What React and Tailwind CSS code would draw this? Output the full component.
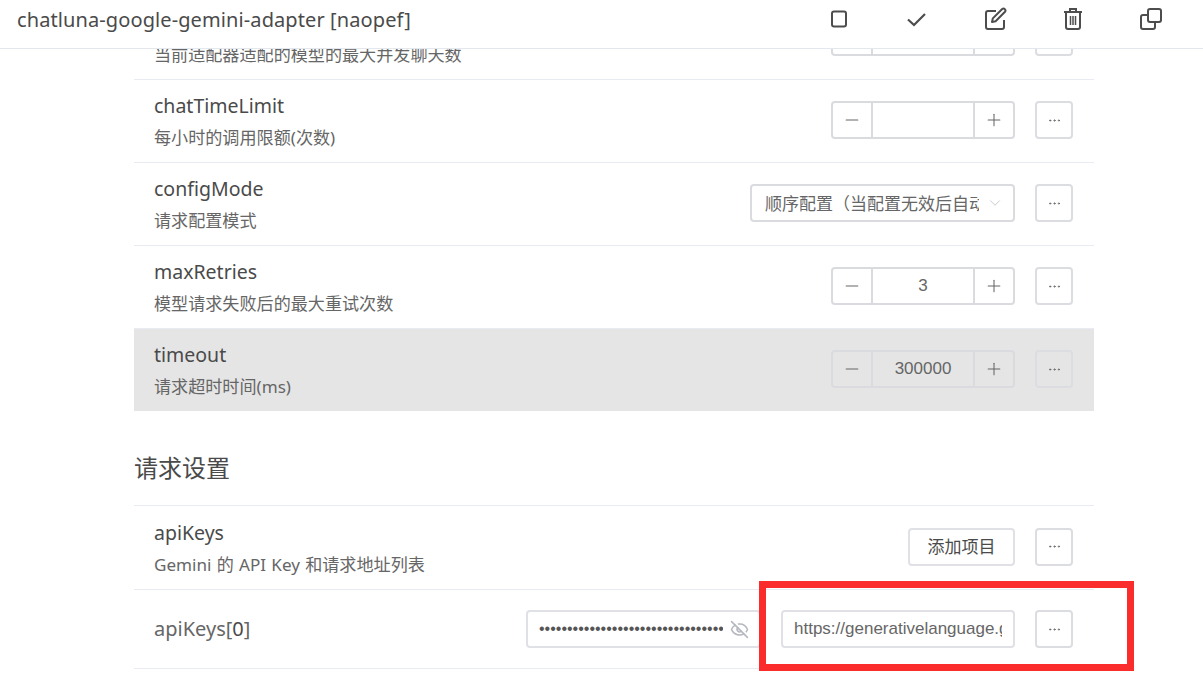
import React from "react";
import { Minus, Plus, Ellipsis, ChevronDown, EyeOff } from "lucide-react";

function More() {
  return (
    <button className="flex h-[38px] w-[38px] shrink-0 items-center justify-center rounded-[4px] border-2 border-[#dbdde1] text-[#666]">
      <Ellipsis size={15} strokeWidth={1.5} />
    </button>
  );
}

function NumberBox({ value }) {
  return (
    <div className="flex h-[38px] w-[184px] items-center rounded-[4px] border-2 border-[#d9dbdf] text-[#666]">
      <span className="flex h-full w-[40px] items-center justify-center border-r-2 border-[#d9dbdf]">
        <Minus size={20} strokeWidth={1.25} />
      </span>
      <span className="flex-1 pb-[1px] text-center font-['Liberation_Sans',sans-serif] text-[17px] leading-[30px]">{value}</span>
      <span className="flex h-full w-[40px] items-center justify-center border-l-2 border-[#d9dbdf]">
        <Plus size={20} strokeWidth={1.25} />
      </span>
    </div>
  );
}

function Row({ title, desc, children, className = "" }) {
  return (
    <div className={`flex h-[83px] items-center justify-between border-t border-[#e8ecf2] pb-[2px] pl-[20px] pr-[21px] ${className}`}>
      <div className="mt-[2px]">
        <div className="text-[19.5px] leading-[27px] text-[#4a4a4a]">{title}</div>
        <div className="mt-[7px] text-[17.1px] leading-[24px] text-[#666] [word-spacing:0.8px]">{desc}</div>
      </div>
      <div className="flex items-center gap-[20px]">
        {children}
        <More />
      </div>
    </div>
  );
}

export default function App() {
  return (
    <div className="relative h-[686px] w-full overflow-hidden bg-white font-['Noto_Sans','Noto_Sans_CJK_SC',sans-serif]">
      <header className="relative z-10 flex h-[49px] items-center justify-between border-b border-[#e3e7ee] bg-white pb-[9px] pl-[17px] pr-[40px]">
        <h1 className="text-[20px] font-normal leading-[30px] tracking-[0.1px] text-[#4a4a4a]">chatluna-google-gemini-adapter [naopef]</h1>
        <div className="mb-[2px] flex items-center gap-[54px] text-[#4d4d4d]">
          <svg width="24" height="24" viewBox="0 0 24 24" fill="none" stroke="currentColor" strokeWidth="2"><rect x="5" y="4.5" width="14" height="15" rx="2" /></svg>
          <svg width="24" height="24" viewBox="0 0 24 24" fill="none" stroke="currentColor" strokeWidth="2.2"><path d="M3 12.5l6 5.5L20 7" /></svg>
          <svg width="24" height="24" viewBox="0 0 24 24" fill="none" stroke="currentColor" strokeWidth="2" strokeLinejoin="round"><path d="M13 4H5a2 2 0 0 0-2 2v14a2 2 0 0 0 2 2h14a2 2 0 0 0 2-2v-7" /><path d="M9 15l.8-3.6L19.2 2a2 2 0 0 1 2.8 2.8l-9.4 9.4z" /></svg>
          <svg width="24" height="24" viewBox="0 0 24 24" fill="none" stroke="currentColor" strokeWidth="2"><path d="M3 5h18" /><path d="M9 5V2h6v3" /><path d="M5 5v15a2 2 0 0 0 2 2h10a2 2 0 0 0 2-2V5" /><path d="M9.5 9v9M12 9v9M14.5 9v9" strokeWidth="1.5" /></svg>
          <svg width="24" height="24" viewBox="0 0 24 24" fill="none" stroke="currentColor" strokeWidth="2"><rect x="9" y="2" width="13" height="13" rx="2" /><path d="M9 8H4a2 2 0 0 0-2 2v10a2 2 0 0 0 2 2h10a2 2 0 0 0 2-2v-5" /></svg>
        </div>
      </header>

      <main className="-mt-[53px] ml-[134px] w-[960px]">
        <Row title="maxConcurrency" desc="当前适配器适配的模型的最大并发聊天数"><NumberBox value="" /></Row>
        <Row title="chatTimeLimit" desc="每小时的调用限额(次数)"><NumberBox value="" /></Row>
        <Row title="configMode" desc="请求配置模式">
          <div className="flex h-[38px] w-[265px] items-center rounded-[4px] border-2 border-[#d9dbdf] pl-[13px] text-[#666]">
            <span className="w-[214px] overflow-hidden whitespace-nowrap pt-[2px] text-[17px]">顺序配置（当配置无效后自动切换）</span>
            <ChevronDown className="ml-[7px] text-[#b5b8bf]" size={18} strokeWidth={1} />
          </div>
        </Row>
        <Row title="maxRetries" desc="模型请求失败后的最大重试次数"><NumberBox value="3" /></Row>
        <Row title="timeout" desc="请求超时时间(ms)" className="bg-[#e5e5e5]"><NumberBox value="300000" /></Row>

        <h2 className="pb-[19px] pt-[39px] text-[24px] font-normal leading-[36px] text-[#4a4a4a]">请求设置</h2>

        <Row title="apiKeys" desc="Gemini 的 API Key 和请求地址列表" className="h-[84px]">
          <button className="flex h-[38px] w-[107px] items-center justify-center rounded-[4px] border-2 border-[#dfe1e6] pt-[1px] text-[17px] text-[#4a4a4a]">添加项目</button>
        </Row>
        <div className="flex h-[80px] items-center justify-between border-y border-[#e8ecf2] pl-[20px] pr-[21px]">
          <div className="text-[20px] text-[#666]">apiKeys[<span className="text-[#4a4a4a]">0</span>]</div>
          <div className="flex items-center gap-[20px]">
            <div className="flex h-[38px] w-[235px] items-center rounded-[4px] border-2 border-[#dfe1e6] pl-[11px] text-[#555]">
              <span className="w-[184px] overflow-hidden whitespace-nowrap font-['Liberation_Sans',sans-serif] text-[16px] leading-none">•••••••••••••••••••••••••••••••••</span>
              <EyeOff className="ml-[7px] text-[#b5b8bf]" size={19} strokeWidth={2} />
            </div>
            <div className="flex h-[38px] w-[234px] items-center rounded-[4px] border-2 border-[#dfe1e6] pl-[11px] text-[#666]">
              <span className="w-[208px] overflow-hidden whitespace-nowrap font-['Liberation_Sans',sans-serif] text-[17px]">https://generativelanguage.googleapis.com</span>
            </div>
            <More />
          </div>
        </div>
      </main>

      <div className="absolute left-[759px] top-[581px] h-[90px] w-[375px] border-[7px] border-[#fb2c2c]" />
    </div>
  );
}
